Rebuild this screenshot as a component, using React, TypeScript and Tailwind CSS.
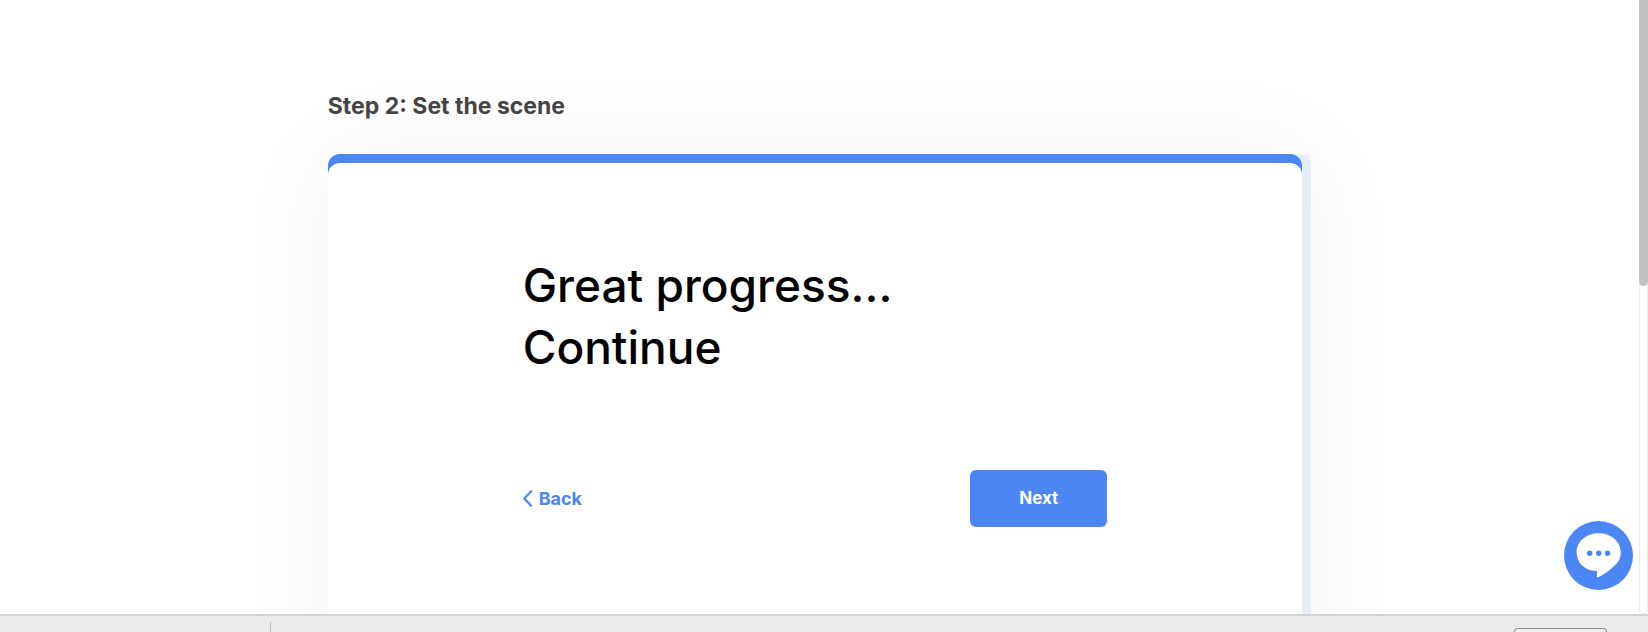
import React from "react";

function BackIcon() {
  return (
    <svg width="10" height="17" viewBox="0 0 10 17" fill="none" aria-hidden="true">
      <path d="M8.2 1.2 1.2 8.5l7 7.3" stroke="currentColor" strokeWidth="2.2" strokeLinecap="round" strokeLinejoin="round" />
    </svg>
  );
}

function ChatIcon() {
  return (
    <svg className="h-full w-full" viewBox="0 0 69 69" aria-hidden="true">
      <circle cx="34.5" cy="34.5" r="34.5" fill="#4c86f5" />
      <path
        d="M34.7 12.2c-12.400 0-22.100 8.200-22.100 19.200 0 10.600 8.400 18 19.300 18.600.7.1 1.100.4 1.100 1.100l-.2 4.400c0 .9.600 1.100 1.400.7 5-2.200 10.600-6.200 15.400-10.600 4.600-4.200 7.200-8.400 7.200-14.200 0-11-9.900-19.200-22.100-19.200Z"
        fill="#fff"
      />
      <circle cx="25.7" cy="32.2" r="2.7" fill="#4c86f5" />
      <circle cx="34.7" cy="32.2" r="2.7" fill="#4c86f5" />
      <circle cx="43.6" cy="32.2" r="2.7" fill="#4c86f5" />
    </svg>
  );
}

function StepCard() {
  return (
    <section className="flex min-h-[540px] rounded-tl-xl bg-[#f3f4f6] shadow-[0_0_100px_rgba(0,0,0,0.055)]">
      <div className="flex min-w-0 flex-1 rounded-t-xl bg-[#e6edf6] pr-[9px]">
        <div className="flex flex-1 flex-col rounded-t-xl bg-[#4c86f5] pt-[9px]">
          <div className="flex-1 rounded-t-xl bg-white px-[20%] pt-[91px]">
            <h1 className="text-[46px] leading-[62px] font-medium text-black">
              Great progress...
              <br />
              Continue
            </h1>
            <div className="mt-[92px] flex items-center justify-between">
              <button type="button" className="flex items-center gap-1.5 text-lg font-bold text-[#4c86f5]">
                <BackIcon />
                Back
              </button>
              <button type="button" className="h-[57px] w-[137px] rounded-md bg-[#4c86f5] text-[17px] font-bold text-white">
                Next
              </button>
            </div>
          </div>
        </div>
      </div>
    </section>
  );
}

export default function App() {
  return (
    <div className="flex h-screen flex-col overflow-hidden bg-white font-['Inter',sans-serif]">
      <div className="flex min-h-0 flex-1">
        <main className="relative min-w-0 flex-1 overflow-hidden pt-[90px]">
          <div className="mx-auto w-3/5">
            <h2 className="relative z-10 mb-[32px] text-[23px] leading-8 font-bold text-[#444444]">Step 2: Set the scene</h2>
            <StepCard />
          </div>
          <button type="button" aria-label="Open chat" className="absolute right-[6px] bottom-[24px] size-[69px] rounded-full">
            <ChatIcon />
          </button>
        </main>
        <div className="w-[9px] rounded-b-full border border-t-0 border-[#ebebeb] bg-white">
          <div className="-mx-px h-[286px] rounded-b-full bg-[#c2c2c2]" />
        </div>
      </div>
      <footer className="flex h-[18px] items-end justify-between border-t-2 border-[#d3d3d3] bg-[#ebebeb] pr-[41px] pl-[270px]">
        <div className="h-[10px] w-px bg-[#bdbdbd]" />
        <div className="h-1 w-[93px] rounded-t-md border border-b-0 border-[#8a8a8a] bg-[#f0eff0]" />
      </footer>
    </div>
  );
}
